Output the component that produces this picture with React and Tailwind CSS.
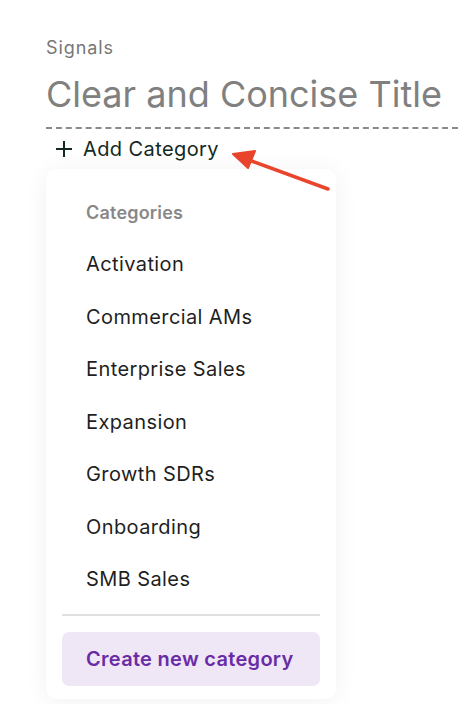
import React from 'react';

const categories = [
  'Activation',
  'Commercial AMs',
  'Enterprise Sales',
  'Expansion',
  'Growth SDRs',
  'Onboarding',
  'SMB Sales',
];

const PlusIcon = () => (
  <svg width="16" height="16" viewBox="0 0 16 16" fill="none" stroke="currentColor" strokeWidth="2" strokeLinecap="square">
    <path d="M8 1v14M1 8h14" />
  </svg>
);

// annotation arrow drawn over the screenshot
const Arrow = () => (
  <svg className="absolute left-0 top-0 pointer-events-none" width="458" height="704" viewBox="0 0 458 704">
    <path d="M328 189 L246 159" stroke="#e8452c" strokeWidth="3.5" strokeLinecap="round" />
    <path d="M233 154 L255 151 L248 168 Z" fill="#e8452c" stroke="#e8452c" strokeWidth="2" strokeLinejoin="round" />
  </svg>
);

export default function App() {
  return (
    <div className="relative w-[458px] h-[704px] bg-white overflow-hidden font-['Inter',sans-serif]">
      <div className="pl-[46px] pt-[36px]">
        <div className="text-[18px] leading-6 tracking-[0.9px] text-[#777777]">Signals</div>
        <div className="mt-[10px] text-[36px] leading-[48px] text-[#808080] whitespace-nowrap">Clear and Concise Title</div>
        <div className="mt-[9px] border-t-2 border-dashed border-[#8a8a8a]" />
        <div className="flex items-center gap-[11px] pl-[10px] h-[40px] text-[#13291e]">
          <PlusIcon />
          <span className="text-[20px] leading-6 tracking-[0.4px]">Add Category</span>
        </div>
        <div className="w-[290px] rounded-[10px] bg-white shadow-[0_2px_24px_rgba(0,0,0,0.06)] px-[16px] pt-[30px] pb-[13px]">
          <div className="pl-[24px] h-[26px] flex items-center text-[18px] font-semibold tracking-[0.2px] text-[#888888]">Categories</div>
          <div className="mt-[13px]">
            {categories.map((c) => (
              <div key={c} className="h-[52.5px] flex items-center pl-[24px] text-[20px] tracking-[0.4px] text-[#1f1f1f]">{c}</div>
            ))}
          </div>
          <div className="mt-[8px] h-[2px] bg-[#e0e0e0]" />
          <button className="mt-[16px] w-full h-[54px] rounded-[7px] bg-[#efe7f6] text-left pl-[24px] text-[20px] font-semibold tracking-[0.3px] text-[#6a2ca6]">
            Create new category
          </button>
        </div>
      </div>
      <Arrow />
    </div>
  );
}
